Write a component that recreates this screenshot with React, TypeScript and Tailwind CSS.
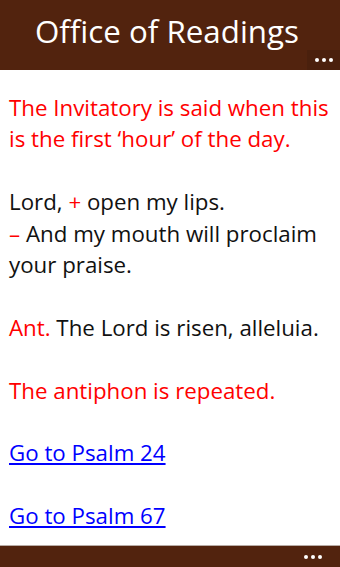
import React from 'react';

const Dots: React.FC = () => (
    <div className="flex items-center gap-[3px]">
        <span className="w-[4px] h-[4px] rounded-full bg-white"></span>
        <span className="w-[4px] h-[4px] rounded-full bg-white"></span>
        <span className="w-[4px] h-[4px] rounded-full bg-white"></span>
    </div>
);

const Blank: React.FC = () => <div className="h-[31.4px]"></div>;

export default function App() {
    return (
        <div className="w-[340px] h-[567px] flex flex-col bg-white overflow-hidden" style={{ fontFamily: '"Open Sans", "Noto Sans", sans-serif' }}>
            <header className="h-[70px] flex-shrink-0 bg-[#52230e] relative flex items-center pl-[35px]">
                <h1 className="text-white text-[31.3px] leading-none -mt-[6px]">Office of Readings</h1>
                <div className="absolute right-0 bottom-0 w-[33px] h-[20px] bg-[#4a200d] flex items-center justify-center">
                    <Dots />
                </div>
            </header>
            <main className="flex-grow px-[9px] pt-[22px] text-[22.3px] leading-[31.4px] text-[#111]">
                <p className="text-[#ff0000]">The Invitatory is said when this is the first ‘hour’ of the day.</p>
                <Blank />
                <p>Lord, <span className="text-[#ff0000]">+</span> open my lips.</p>
                <p><span className="text-[#ff0000]">–</span> And my mouth will proclaim your praise.</p>
                <Blank />
                <p><span className="text-[#ff0000]">Ant.</span> The Lord is risen, alleluia.</p>
                <Blank />
                <p className="text-[#ff0000]">The antiphon is repeated.</p>
                <Blank />
                <p><a href="#" className="text-[#0000ff] underline">Go to Psalm 24</a></p>
                <Blank />
                <p><a href="#" className="text-[#0000ff] underline">Go to Psalm 67</a></p>
            </main>
            <footer className="h-[22px] flex-shrink-0 bg-[#52230e] border-t border-[#b8aca6] flex items-center justify-end pr-[18px]">
                <Dots />
            </footer>
        </div>
    );
}
